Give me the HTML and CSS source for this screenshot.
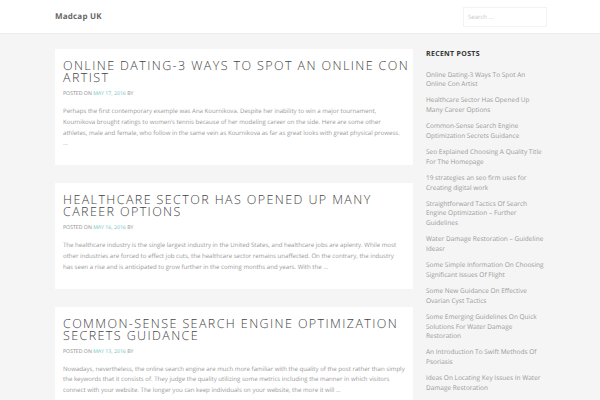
FILE: index.html
```html
<!DOCTYPE html>
<html lang="en">
<head>
<meta charset="utf-8">
<title>Madcap UK</title>
<link rel="stylesheet" href="styles.css">
</head>
<body>
<header class="site-header">
  <div class="container header-inner">
    <div class="site-title">Madcap UK</div>
    <div class="search-box">Search ...</div>
  </div>
</header>
<div class="container content">
  <main class="posts">
    <article class="card">
      <h2 class="post-title">Online Dating-3 Ways To Spot An Online Con Artist</h2>
      <div class="meta">Posted on <span class="date">May 17, 2016</span> by</div>
      <p class="excerpt">Perhaps the first contemporary example was Ana Kournikova. Despite her inability to win a major tournament, Kournikova brought ratings to women’s tennis because of her modeling career on the side. Here are some other athletes, male and female, who follow in the same vein as Kournikova as far as great looks with great physical prowess. …</p>
    </article>
    <article class="card">
      <h2 class="post-title">Healthcare Sector Has Opened Up Many Career Options</h2>
      <div class="meta">Posted on <span class="date">May 16, 2016</span> by</div>
      <p class="excerpt">The healthcare industry is the single largest industry in the United States, and healthcare jobs are aplenty. While most other industries are forced to effect job cuts, the healthcare sector remains unaffected. On the contrary, the industry has seen a rise and is anticipated to grow further in the coming months and years. With the …</p>
    </article>
    <article class="card">
      <h2 class="post-title">Common-Sense Search Engine Optimization Secrets Guidance</h2>
      <div class="meta">Posted on <span class="date">May 13, 2016</span> by</div>
      <p class="excerpt">Nowadays, nevertheless, the online search engine are much more familiar with the quality of the post rather than simply the keywords that it consists of. They judge the quality utilizing some metrics including the manner in which visitors connect with your website. The longer you can keep individuals on your website, the more it will …</p>
    </article>
  </main>
  <aside class="sidebar">
    <h3 class="widget-title">Recent Posts</h3>
    <ul class="recent">
      <li>Online Dating-3 Ways To Spot An Online Con Artist</li>
      <li>Healthcare Sector Has Opened Up Many Career Options</li>
      <li>Common-Sense Search Engine Optimization Secrets Guidance</li>
      <li>Seo Explained Choosing A Quality Title For The Homepage</li>
      <li>19 strategies an seo firm uses for Creating digital work</li>
      <li>Straightforward Tactics Of Search Engine Optimization – Further Guidelines</li>
      <li>Water Damage Restoration – Guideline Ideasr</li>
      <li>Some Simple Information On Choosing Significant Issues Of Flight</li>
      <li>Some New Guidance On Effective Ovarian Cyst Tactics</li>
      <li>Some Emerging Guidelines On Quick Solutions For Water Damage Restoration</li>
      <li>An Introduction To Swift Methods Of Psoriasis</li>
      <li>Ideas On Locating Key Issues In Water Damage Restoration</li>
    </ul>
  </aside>
</div>
</body>
</html>
```
FILE: styles.css
```css
html, body {
  margin: 0;
  padding: 0;
}
body {
  background: #f5f5f5;
  font-family: "Open Sans", "Liberation Sans", sans-serif;
  color: #999;
  overflow: hidden;
  text-rendering: geometricPrecision;
}
.container {
  width: 492px;
  margin-left: 55px;
}
.site-header {
  background: #fff;
  height: 34px;
  border-bottom: 1px solid #ececec;
  box-sizing: border-box;
}
.header-inner {
  display: flex;
  align-items: center;
  justify-content: space-between;
  height: 100%;
}
.site-title {
  font-weight: 700;
  font-size: 8px;
  color: #666;
  letter-spacing: 0.2px;
}
.search-box {
  width: 84px;
  height: 20px;
  box-sizing: border-box;
  border: 1px solid #f3f3f3;
  font-size: 6px;
  color: #c8c8c8;
  padding-left: 4px;
  line-height: 18px;
}
.content {
  display: flex;
  gap: 13px;
  margin-top: 15px;
  align-items: flex-start;
}
.posts {
  width: 358px;
  flex: none;
  display: flex;
  flex-direction: column;
  gap: 18px;
}
.card {
  background: #fff;
  padding: 11px 8px 16px 8px;
}
.post-title {
  margin: 0 -10px 0 0;
  font-weight: 300;
  font-size: 12.5px;
  line-height: 12px;
  letter-spacing: 1.4px;
  text-transform: uppercase;
  color: #444;
}
.meta {
  margin-top: 5px;
  font-size: 5.2px;
  text-transform: uppercase;
  color: #888;
  line-height: 8px;
}
.date {
  color: #6cc5c0;
}
.excerpt {
  margin: 9px 0 0 0;
  font-size: 6.1px;
  line-height: 10.8px;
  color: #999;
}
.sidebar {
  width: 119px;
  flex: none;
}
.widget-title {
  margin: 0 0 8.5px 0;
  font-size: 7px;
  font-weight: 700;
  text-transform: uppercase;
  color: #333;
  letter-spacing: 0.3px;
  line-height: 12px;
}
.recent {
  list-style: none;
  margin: 0;
  padding: 0;
}
.recent li {
  font-size: 6.5px;
  line-height: 9.6px;
  margin-bottom: 6.7px;
  color: #999;
}
```
